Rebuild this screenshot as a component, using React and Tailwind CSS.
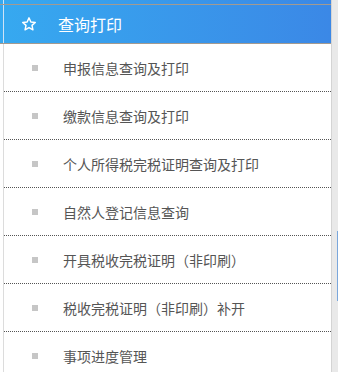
import React from "react";

const items = [
  "申报信息查询及打印",
  "缴款信息查询及打印",
  "个人所得税完税证明查询及打印",
  "自然人登记信息查询",
  "开具税收完税证明（非印刷）",
  "税收完税证明（非印刷）补开",
  "事项进度管理",
];

export default function App() {
  return (
    <div
      className="relative flex h-[372px] w-[338px] overflow-hidden bg-white"
      style={{ fontFamily: '"Noto Sans CJK SC", "Noto Sans", sans-serif' }}
    >
      <div className="flex w-[331px] flex-col">
        <div className="bg-gradient-to-r from-[#36a9f0] to-[#3b88e6]">
          <div className="flex h-[4px]">
            <div className="w-[3px]" />
            <div className="w-px bg-[#cfe3f6]" />
          </div>
          <div className="h-px bg-[#a39a90]" />
          <div className="flex h-[38px] items-center">
            <div className="w-[3px] self-stretch" />
            <div className="w-px self-stretch bg-[#cfe3f6]" />
            <div className="ml-[17px] flex h-[16px] w-[16px] items-center justify-center">
              <svg width="16" height="16" viewBox="0 0 24 24" fill="none" stroke="white" strokeWidth="2.2" strokeLinejoin="round">
                <path d="M12 2.8l2.8 6.1 6.6.7-4.9 4.5 1.4 6.6L12 17.4l-5.9 3.3 1.4-6.6-4.9-4.5 6.6-.7z" />
              </svg>
            </div>
            <span className="ml-[21px] text-[16px] leading-none text-white">查询打印</span>
          </div>
          <div className="h-px bg-[#a39a90]" />
        </div>
        <div className="ml-[3px] flex-1 border-l border-[#dcdcdc]">
          {items.map((t) => (
            <div
              key={t}
              className="flex h-[48px] items-center border-b border-dotted border-[#555]"
            >
              <div className="ml-[28px] h-[6px] w-[6px] bg-[#c6c6c6]" />
              <span className="ml-[25px] text-[14px] leading-none text-[#555]">{t}</span>
            </div>
          ))}
        </div>
      </div>
      <div className="relative w-[7px] border-l border-[#d4d4d4] bg-[#e9e9e9]">
        <div className="absolute right-0 top-[231px] h-[70px] w-px bg-[#7aa7dc]" />
      </div>
    </div>
  );
}
